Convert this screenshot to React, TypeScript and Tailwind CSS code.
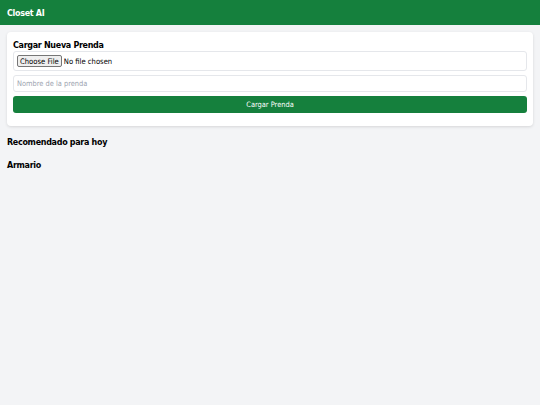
import React from "react";

const reg = "font-['DejaVu_Sans_Condensed','DejaVu_Sans',sans-serif] [font-stretch:condensed]";
const bold = "font-['DejaVu_Sans',sans-serif] [font-stretch:normal] font-bold text-[8px] leading-[10px] tracking-[-0.3px]";

export default function App() {
  return (
    <div className={`min-h-[405px] bg-[#f3f4f6] ${reg}`}>
      <header className="h-[25px] bg-[#15803d] px-[7px] pt-[2px] flex items-center">
        <h1 className={`text-white ${bold}`}>Closet AI</h1>
      </header>
      <main className="px-[7px] pt-[7px]">
        <div className="bg-white rounded-[4px] shadow-[0_1px_3px_rgba(0,0,0,0.12)] px-[6px] pt-[9px] pb-[13px]">
          <h2 className={`text-black ${bold}`}>Cargar Nueva Prenda</h2>
          <div className="border border-[#e5e7eb] rounded-[3px] h-[20px] flex items-center px-[3px] mb-[4px]">
            <input
              type="file"
              className={`${reg} text-[7.6px] leading-[9px] text-black file:font-['DejaVu_Sans_Condensed','DejaVu_Sans',sans-serif] file:text-[7.6px] file:px-[2px] file:h-[12px] file:border file:border-[#767676] file:bg-[#efefef] file:rounded-[2px] file:mr-[2px]`}
            />
          </div>
          <input
            type="text"
            placeholder="Nombre de la prenda"
            className={`${reg} block w-full h-[17px] border border-[#e5e7eb] rounded-[3px] px-[3px] text-[7.4px] leading-[9px] placeholder:text-[#9ca3af] mb-[4px] outline-none`}
          />
          <button className={`${reg} block w-full h-[17px] bg-[#15803d] text-white text-[7.4px] leading-[9px] rounded-[3px]`}>
            Cargar Prenda
          </button>
        </div>
        <h2 className={`text-black mt-[12px] ${bold}`}>Recomendado para hoy</h2>
        <h2 className={`text-black mt-[13px] ${bold}`}>Armario</h2>
      </main>
    </div>
  );
}
